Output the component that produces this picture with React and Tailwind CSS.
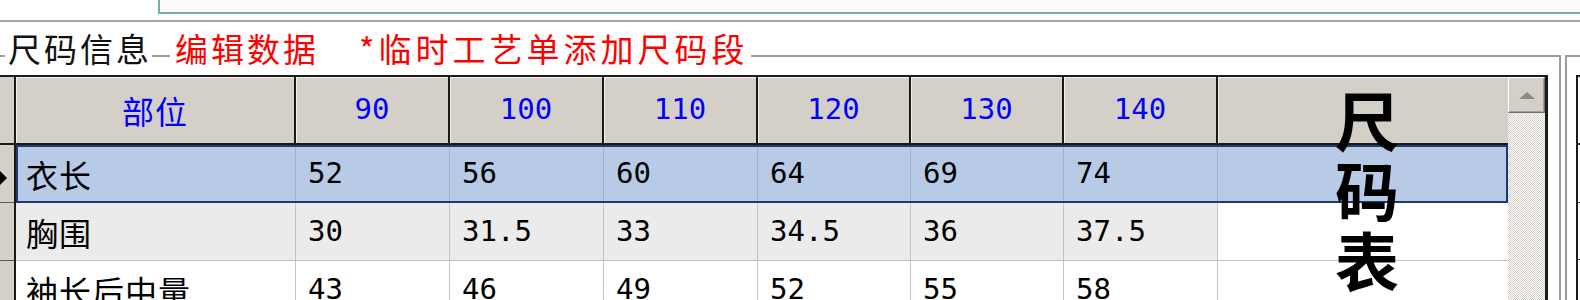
import React from "react";

// size table data
const sizes = ["90", "100", "110", "120", "130", "140"];
const rows = [
  { name: "衣长", vals: ["52", "56", "60", "64", "69", "74"], selected: true },
  { name: "胸围", vals: ["30", "31.5", "33", "34.5", "36", "37.5"], shaded: true },
  { name: "袖长后中量", vals: ["43", "46", "49", "52", "55", "58"] },
];

const cjk = "font-['Noto_Sans_CJK_SC',sans-serif]";
const mono = "font-['DejaVu_Sans_Mono',monospace]";
const cols = "grid grid-cols-[280px_154px_154px_154px_153px_153px_154px_1fr]";

function HeaderRow() {
  return (
    <div className={`${cols} h-[68px] shrink-0 border-b-2 border-[#1a1a1a] bg-[#d4d0c8]`}>
      <div className={`${cjk} flex items-center justify-center border-r-2 border-[#1a1a1a] text-[32px] tracking-[1px] text-[#0000ff] shadow-[inset_1px_1px_0_#f4f2ee]`}>
        部位
      </div>
      {sizes.map((s) => (
        <div
          key={s}
          className={`${mono} flex items-center justify-center border-r-2 border-[#1a1a1a] text-[29px] text-[#0000ff] shadow-[inset_1px_1px_0_#f4f2ee]`}
        >
          {s}
        </div>
      ))}
      <div className="shadow-[inset_1px_1px_0_#f4f2ee]" />
    </div>
  );
}

function DataRow({ row }) {
  const bg = row.selected ? "bg-[#b7cbe7]" : row.shaded ? "bg-[#ebebeb]" : "bg-white";
  const line = row.selected ? "border-[#9fb3d1]" : "border-[#c4c4c4]";
  return (
    <div
      className={`${cols} h-[58px] shrink-0 ${
        row.selected ? "outline-2 -outline-offset-2 outline-[#1d3b72]" : ""
      }`}
    >
      <div className={`${cjk} ${bg} ${line} flex items-center border-r border-b pl-[10px] text-[32px] tracking-[1px] text-black`}>
        {row.name}
      </div>
      {row.vals.map((v, i) => (
        <div key={i} className={`${mono} ${bg} ${line} flex items-center border-r border-b pl-[12px] text-[29px] text-black`}>
          {v}
        </div>
      ))}
      <div className={`${row.selected ? "bg-[#b7cbe7]" : "bg-white"} border-b ${line}`} />
    </div>
  );
}

function Indicator() {
  return (
    <div className="flex w-[16px] shrink-0 flex-col border-r-2 border-[#1a1a1a] bg-[#d4d0c8]">
      <div className="h-[68px] shrink-0 border-b-2 border-[#1a1a1a]" />
      <div className="flex h-[58px] shrink-0 items-center border-b border-[#5a5a5a] pt-[8px]">
        <div className="h-0 w-0 border-y-[7px] border-l-[7px] border-y-transparent border-l-black" />
      </div>
      <div className="h-[58px] shrink-0 border-b border-[#5a5a5a]" />
      <div className="h-[58px] shrink-0 border-b border-[#5a5a5a]" />
    </div>
  );
}

function ScrollBar() {
  return (
    <div className="flex w-[37px] shrink-0 flex-col bg-[repeating-conic-gradient(#d4d0c8_0_25%,#ffffff_0_50%)] bg-[length:2px_2px]">
      <div className="flex h-[36px] shrink-0 items-center justify-center border border-t-white border-l-white border-r-[#6e6e6e] border-b-[#6e6e6e] bg-[#d4d0c8] shadow-[inset_-1px_-1px_0_#a0a0a0]">
        <div className="h-0 w-0 border-x-[8px] border-b-[7px] border-x-transparent border-b-[#8a8a8a]" />
      </div>
    </div>
  );
}

export default function App() {
  return (
    <div className="h-[300px] w-[1580px] overflow-hidden bg-white">
      {/* top input box edge */}
      <div className="flex h-[20px]">
        <div className="w-[158px]" />
        <div className="h-[14px] flex-1 border-b-2 border-l-2 border-[#6fb3a3] bg-[#fefafc]" />
      </div>
      <div className="h-[2px] bg-[#a6a6a6]" />

      {/* group boxes */}
      <div className="mt-[33px] flex">
        <div className="h-[245px] w-[1561px] shrink-0 border-t-2 border-r-2 border-[#9c9c9c]">
          {/* legend */}
          <div className={`${cjk} -mt-[24px] flex h-[42px] items-start`}>
            <div className="w-[5px]" />
            <div className="h-[30px] bg-white pl-[3px] text-[33px] leading-[30px] tracking-[3px] text-[#111]">
              尺码信息
            </div>
            <div className="w-[18px]" />
            <div className="flex h-[30px] bg-white pl-[5px] pr-[3px] text-[33px] leading-[30px] text-[#ff0000]">
              <span className="tracking-[3px]">编辑数据</span>
              <span className="ml-[40px] tracking-[4px]">*临时工艺单添加尺码段</span>
            </div>
          </div>

          {/* size grid */}
          <div className="relative flex h-[230px] w-[1548px] overflow-hidden border-t-2 border-r-[3px] border-[#1a1a1a]">
            <Indicator />
            <div className="flex w-[1492px] shrink-0 flex-col">
              <HeaderRow />
              {rows.map((r) => (
                <DataRow key={r.name} row={r} />
              ))}
            </div>
            <ScrollBar />

            {/* big vertical label over last column */}
            <div className={`${cjk} absolute top-[6px] left-[1218px] flex w-[290px] flex-col items-center pl-[8px] text-[64px] font-bold leading-[70px] text-black`}>
              <span>尺</span>
              <span>码</span>
              <span>表</span>
            </div>
          </div>
        </div>

        <div className="w-[4px] shrink-0" />

        {/* neighbouring group box, cut at the edge */}
        <div className="h-[245px] flex-1 border-t-2 border-l-2 border-[#9c9c9c]">
          <div className="mt-[18px] ml-[9px] flex h-[230px] flex-col border-t-2 border-l-2 border-[#1a1a1a]">
            <div className="h-[68px] shrink-0 border-b-2 border-[#1a1a1a]" />
            <div className="h-[58px] shrink-0 border-b border-[#333]" />
            <div className="h-[57px] shrink-0 border-b border-[#333]" />
          </div>
        </div>
      </div>
    </div>
  );
}
